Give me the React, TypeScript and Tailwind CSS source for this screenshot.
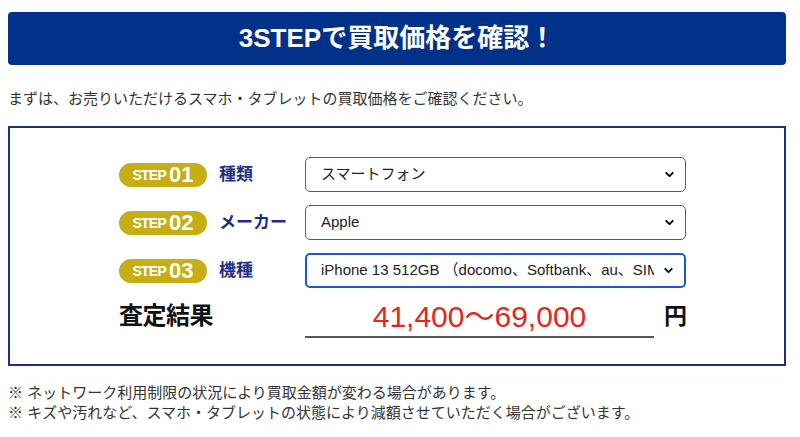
import { ChevronDown } from "lucide-react";

const steps = [
  { no: "01", label: "種類", value: "スマートフォン", focused: false },
  { no: "02", label: "メーカー", value: "Apple", focused: false },
  { no: "03", label: "機種", value: "iPhone 13 512GB （docomo、Softbank、au、SIMフリー）", focused: true },
];

function StepPill({ no }: { no: string }) {
  return (
    <div className="flex items-center justify-center w-[88px] h-6 rounded-full bg-[#c6ae14] text-white font-bold">
      <span className="text-[14px] tracking-[-0.8px] leading-none">STEP</span>
      <span className="ml-[3px] text-[22px] leading-none">{no}</span>
    </div>
  );
}

function FakeSelect({ value, focused }: { value: string; focused: boolean }) {
  return (
    <div
      className={`flex items-center w-[381px] h-[35px] rounded-[5px] bg-white pr-[9px] ${
        focused ? "border-2 border-[#1f56cf] pl-[14px]" : "border border-[#4159a8] pl-[15px]"
      }`}
    >
      <span className="flex-1 overflow-hidden whitespace-nowrap text-[15px] text-[#222]">{value}</span>
      <ChevronDown size={13} strokeWidth={3.5} className="ml-2 text-black shrink-0" />
    </div>
  );
}

export default function App() {
  return (
    <div className="w-[800px] h-[437px] bg-white pt-3 font-['Liberation_Sans','Noto_Sans_CJK_JP',sans-serif]">
      {/* Header */}
      <div className="ml-2 w-[778px] h-[53px] rounded bg-[#02318a] flex items-center justify-center text-white text-[26px] font-bold">
        3STEPで買取価格を確認！
      </div>

      <p className="ml-2 mt-6 text-[15px] leading-5 text-[#333]">
        まずは、お売りいただけるスマホ・タブレットの買取価格をご確認ください。
      </p>

      {/* Steps box */}
      <div className="ml-2 mt-[17px] w-[778px] h-[240px] border-2 border-[#1b2f86] pl-[109px] pt-[29px]">
        <div className="flex flex-col gap-[13px]">
          {steps.map((s) => (
            <div key={s.no} className="flex items-center h-[35px]">
              <StepPill no={s.no} />
              <span className="w-[98px] pl-3 text-[17px] font-bold text-[#1c2f87]">{s.label}</span>
              <FakeSelect value={s.value} focused={s.focused} />
            </div>
          ))}
        </div>

        {/* Result */}
        <div className="flex items-center mt-[6px]">
          <span className="w-[186px] text-[24px] font-bold text-[#111] tracking-[-0.5px]">査定結果</span>
          <div className="w-[349px] h-[44px] border-b-2 border-[#555] flex items-center justify-center pt-1">
            <span className="text-[30px] text-[#e2271d] leading-none">41,400〜69,000</span>
          </div>
          <span className="ml-[10px] text-[23px] font-bold text-[#111]">円</span>
        </div>
      </div>

      {/* Notes */}
      <div className="ml-2 mt-[17px] text-[15px] leading-5 text-[#333]">
        <p>※ ネットワーク利用制限の状況により買取金額が変わる場合があります。</p>
        <p>※ キズや汚れなど、スマホ・タブレットの状態により減額させていただく場合がございます。</p>
      </div>
    </div>
  );
}
